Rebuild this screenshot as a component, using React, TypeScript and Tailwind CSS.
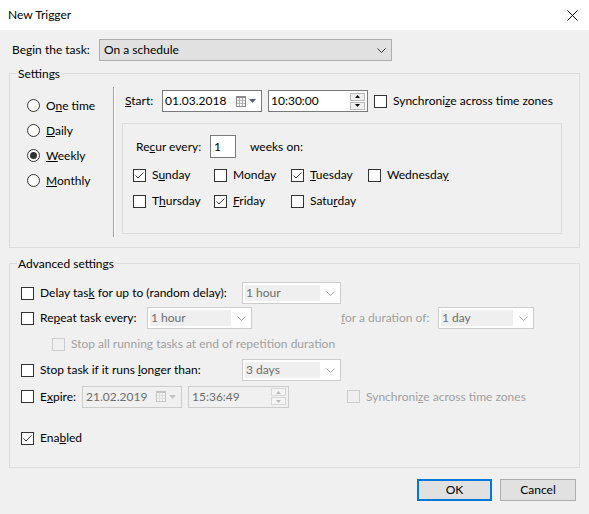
import React from "react";

function Check({ checked = false, disabled = false }: { checked?: boolean; disabled?: boolean }) {
  return (
    <span
      className={
        disabled
          ? "w-[13px] h-[13px] shrink-0 border border-[#cccccc] bg-[#f0f0f0] flex items-center justify-center"
          : "w-[13px] h-[13px] shrink-0 border border-[#333333] bg-white flex items-center justify-center"
      }
    >
      {checked && (
        <svg width="11" height="11" viewBox="0 0 11 11">
          <path d="M1.5 5.5 L4 8 L9.5 2.5" fill="none" stroke="#333333" strokeWidth="1" />
        </svg>
      )}
    </span>
  );
}

function Radio({ checked = false }: { checked?: boolean }) {
  return (
    <span className="w-[13px] h-[13px] shrink-0 rounded-full border border-[#333333] bg-white flex items-center justify-center">
      {checked && <span className="w-[7px] h-[7px] rounded-full bg-[#333333]" />}
    </span>
  );
}

function Chevron({ color }: { color: string }) {
  return (
    <svg width="9" height="5" viewBox="0 0 9 5">
      <polyline points="0.5,0.5 4.5,4.5 8.5,0.5" fill="none" stroke={color} strokeWidth="1" />
    </svg>
  );
}

function Calendar({ disabled = false }: { disabled?: boolean }) {
  const edge = disabled ? "#c4c4c4" : "#8a8a8a";
  const grid = disabled ? "#dddddd" : "#b4b4b4";
  const tri = disabled ? "#c4c4c4" : "#4a6584";
  return (
    <span className="flex items-center gap-[3px]">
      <svg width="10" height="11" viewBox="0 0 10 11">
        <rect x="0.5" y="0.5" width="9" height="10" fill={disabled ? "#f4f4f4" : "#ffffff"} stroke={edge} />
        <rect x="0" y="0" width="10" height="2" fill={edge} />
        <line x1="3.5" y1="2" x2="3.5" y2="10" stroke={grid} />
        <line x1="6.5" y1="2" x2="6.5" y2="10" stroke={grid} />
        <line x1="1" y1="4.5" x2="9" y2="4.5" stroke={grid} />
        <line x1="1" y1="7.5" x2="9" y2="7.5" stroke={grid} />
      </svg>
      <svg width="7" height="4" viewBox="0 0 7 4">
        <path d="M0 0 H7 L3.5 4 Z" fill={tri} />
      </svg>
    </span>
  );
}

function Spin({ disabled = false }: { disabled?: boolean }) {
  const tri = disabled ? "#b8b8b8" : "#000000";
  return (
    <span className="flex flex-col gap-[1px] w-[15px]">
      <span
        className={
          disabled
            ? "h-[8px] border border-[#d6d6d6] bg-[#f4f4f4] flex items-center justify-center"
            : "h-[8px] border border-[#b8b8b8] bg-[#f0f0f0] flex items-center justify-center"
        }
      >
        <svg width="5" height="3" viewBox="0 0 5 3">
          <path d="M0 3 H5 L2.5 0 Z" fill={tri} />
        </svg>
      </span>
      <span
        className={
          disabled
            ? "h-[8px] border border-[#d6d6d6] bg-[#f4f4f4] flex items-center justify-center"
            : "h-[8px] border border-[#b8b8b8] bg-[#f0f0f0] flex items-center justify-center"
        }
      >
        <svg width="5" height="3" viewBox="0 0 5 3">
          <path d="M0 0 H5 L2.5 3 Z" fill={tri} />
        </svg>
      </span>
    </span>
  );
}

function DisabledCombo({ value, width }: { value: string; width: string }) {
  return (
    <div className={`${width} h-[22px] border border-[#cccccc] bg-white flex items-stretch pl-[2px] pt-[2px] pb-[2px]`}>
      <div className="flex-1 bg-[#efefef] flex items-center pl-[1px] text-[#6d6d6d]">{value}</div>
      <div className="w-[20px] flex items-center justify-center">
        <Chevron color="#a8a8a8" />
      </div>
    </div>
  );
}

export default function App() {
  return (
    <div className="w-[589px] h-[514px] bg-[#f0f0f0] text-[12px] leading-none text-black font-['Lato','Noto_Sans',sans-serif] flex flex-col overflow-hidden">
      {/* Title bar */}
      <div className="h-[30px] bg-white flex items-center justify-between pl-[8px] pr-[11px] shrink-0">
        <span>New Trigger</span>
        <svg width="11" height="11" viewBox="0 0 11 11">
          <line x1="0.5" y1="0.5" x2="10.5" y2="10.5" stroke="#000" strokeWidth="1" />
          <line x1="10.5" y1="0.5" x2="0.5" y2="10.5" stroke="#000" strokeWidth="1" />
        </svg>
      </div>

      {/* Begin the task */}
      <div className="flex items-center mt-[9px] pl-[12px] h-[22px]">
        <span className="w-[87px]">Begin the task:</span>
        <div className="w-[293px] h-[22px] border border-[#adadad] bg-[#e1e1e1] flex items-center pl-[4px] pr-[5px]">
          <span className="flex-1">On a schedule</span>
          <Chevron color="#333333" />
        </div>
      </div>

      {/* Settings */}
      <fieldset className="ml-[9px] w-[571px] mt-[5px] border border-[#dcdcdc] pt-[6px] pb-[10px]">
        <legend className="ml-[7px] px-[1px] h-[15px] leading-[15px]">Settings</legend>
        <div className="flex h-[150px]">
          <div className="w-[103px] pl-[17px] pt-[6px] flex flex-col">
            <div className="h-[25px] flex items-center gap-[6px]">
              <Radio />
              <span>
                O<u>n</u>e time
              </span>
            </div>
            <div className="h-[25px] flex items-center gap-[6px]">
              <Radio />
              <span>
                <u>D</u>aily
              </span>
            </div>
            <div className="h-[25px] flex items-center gap-[6px]">
              <Radio checked />
              <span>
                <u>W</u>eekly
              </span>
            </div>
            <div className="h-[25px] flex items-center gap-[6px]">
              <Radio />
              <span>
                <u>M</u>onthly
              </span>
            </div>
          </div>
          <div className="w-[2px] border-l border-l-[#a0a0a0] border-r border-r-white" />
          <div className="flex-1 flex flex-col">
            <div className="mt-[3px] pl-[10px] h-[22px] flex items-center">
              <span className="w-[37px]">
                <u>S</u>tart:
              </span>
              <div className="w-[100px] h-[22px] border border-[#7a7a7a] bg-white flex items-center pl-[2px] pr-[5px]">
                <span className="flex-1">01.03.2018</span>
                <Calendar />
              </div>
              <div className="ml-[6px] w-[100px] h-[22px] border border-[#7a7a7a] bg-white flex items-center pl-[2px] pr-[2px]">
                <span className="flex-1">10:30:00</span>
                <Spin />
              </div>
              <span className="ml-[6px]">
                <Check />
              </span>
              <span className="ml-[6px]">
                Synchroni<u>z</u>e across time zones
              </span>
            </div>
            <div className="ml-[7px] mt-[11px] w-[440px] h-[111px] border border-[#dcdcdc] pt-[11px] pl-[10px]">
              <div className="pl-[3px] h-[23px] flex items-center">
                <span className="w-[74px]">
                  Re<u>c</u>ur every:
                </span>
                <div className="w-[26px] h-[23px] border border-[#7a7a7a] bg-white flex items-center pl-[3px]">1</div>
                <span className="ml-[14px]">weeks on:</span>
              </div>
              <div className="mt-[4px] grid grid-cols-[81px_77px_77px_auto] auto-rows-[26px]">
                <div className="flex items-center gap-[6px]">
                  <Check checked />
                  <span>
                    S<u>u</u>nday
                  </span>
                </div>
                <div className="flex items-center gap-[6px]">
                  <Check />
                  <span>
                    Mond<u>a</u>y
                  </span>
                </div>
                <div className="flex items-center gap-[6px]">
                  <Check checked />
                  <span>
                    <u>T</u>uesday
                  </span>
                </div>
                <div className="flex items-center gap-[6px]">
                  <Check />
                  <span>
                    Wednesda<u>y</u>
                  </span>
                </div>
                <div className="flex items-center gap-[6px]">
                  <Check />
                  <span>
                    T<u>h</u>ursday
                  </span>
                </div>
                <div className="flex items-center gap-[6px]">
                  <Check checked />
                  <span>
                    <u>F</u>riday
                  </span>
                </div>
                <div className="flex items-center gap-[6px]">
                  <Check />
                  <span>
                    Satu<u>r</u>day
                  </span>
                </div>
              </div>
            </div>
          </div>
        </div>
      </fieldset>

      {/* Advanced settings */}
      <fieldset className="ml-[9px] w-[571px] mt-[8px] border border-[#dcdcdc] pt-[10px] pb-[17px] pl-[11px]">
        <legend className="ml-[-4px] px-[1px] h-[15px] leading-[15px]">Advanced settings</legend>
        <div className="h-[24px] flex items-center">
          <div className="w-[221px] flex items-center gap-[6px]">
            <Check />
            <span>
              Delay tas<u>k</u> for up to (random delay):
            </span>
          </div>
          <DisabledCombo value="1 hour" width="w-[99px]" />
        </div>
        <div className="h-[26px] flex items-center">
          <div className="w-[126px] flex items-center gap-[6px]">
            <Check />
            <span>
              Re<u>p</u>eat task every:
            </span>
          </div>
          <DisabledCombo value="1 hour" width="w-[105px]" />
          <span className="ml-[89px] w-[97px] text-[#a0a0a0]">
            <u>f</u>or a duration of:
          </span>
          <DisabledCombo value="1 day" width="w-[96px]" />
        </div>
        <div className="h-[26px] flex items-center pl-[31px] gap-[6px]">
          <Check disabled />
          <span className="text-[#a0a0a0]">
            Stop all running tasks at end of repetition durat<u>i</u>on
          </span>
        </div>
        <div className="h-[26px] flex items-center">
          <div className="w-[221px] flex items-center gap-[6px]">
            <Check />
            <span>
              Stop task if it runs <u>l</u>onger than:
            </span>
          </div>
          <DisabledCombo value="3 days" width="w-[99px]" />
        </div>
        <div className="h-[27px] flex items-center">
          <div className="w-[61px] flex items-center gap-[6px]">
            <Check />
            <span>
              E<u>x</u>pire:
            </span>
          </div>
          <div className="w-[100px] h-[22px] border border-[#cccccc] bg-[#f0f0f0] flex items-center pl-[3px] pr-[5px] text-[#6d6d6d]">
            <span className="flex-1">21.02.2019</span>
            <Calendar disabled />
          </div>
          <div className="ml-[6px] w-[101px] h-[22px] border border-[#cccccc] bg-[#f0f0f0] flex items-center pl-[3px] pr-[2px] text-[#6d6d6d]">
            <span className="flex-1">15:36:49</span>
            <Spin disabled />
          </div>
          <span className="ml-[58px]">
            <Check disabled />
          </span>
          <span className="ml-[6px] text-[#a0a0a0]">
            Synchroni<u>z</u>e across time zones
          </span>
        </div>
        <div className="mt-[16px] h-[24px] flex items-center gap-[6px]">
          <Check checked />
          <span>
            Ena<u>b</u>led
          </span>
        </div>
      </fieldset>

      {/* Buttons */}
      <div className="mt-[11px] flex justify-end gap-[8px] pr-[13px]">
        <button className="w-[75px] h-[22px] border-2 border-[#0078d7] bg-[#e1e1e1] flex items-center justify-center">
          OK
        </button>
        <button className="w-[76px] h-[22px] border border-[#adadad] bg-[#e1e1e1] flex items-center justify-center">
          Cancel
        </button>
      </div>
    </div>
  );
}
